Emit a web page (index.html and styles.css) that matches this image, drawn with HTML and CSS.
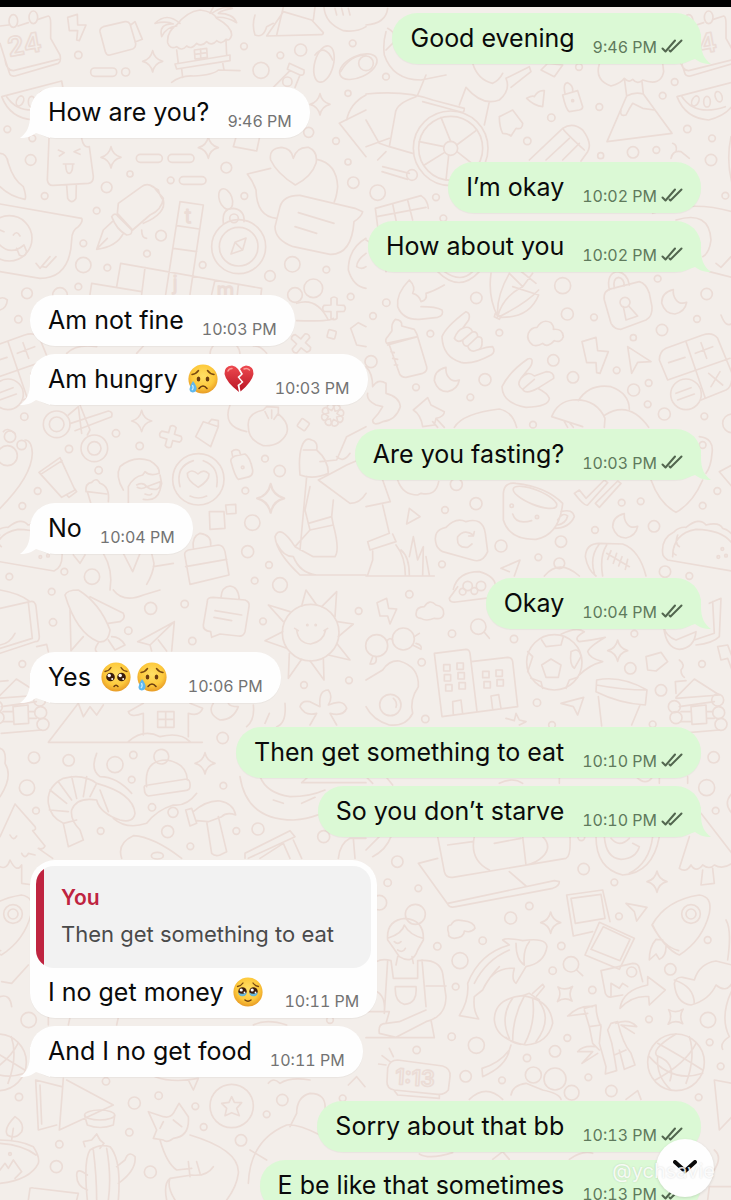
FILE: index.html
```
<!DOCTYPE html>
<html lang="en">
<head>
    <meta charset="UTF-8">
    <meta name="viewport" content="width=device-width, initial-scale=1">
    <title>Chat</title>
    <link rel="stylesheet" href="styles.css">
</head>
<body>
    <svg width="0" height="0" class="defs" aria-hidden="true">
        <defs>
            <radialGradient id="skin" cx="50%" cy="40%" r="60%">
                <stop offset="0" stop-color="#ffe066"/>
                <stop offset="0.65" stop-color="#fdc93c"/>
                <stop offset="1" stop-color="#e79a25"/>
            </radialGradient>
            <linearGradient id="red" x1="0" y1="0" x2="0" y2="1">
                <stop offset="0" stop-color="#ee4a50"/>
                <stop offset="1" stop-color="#b81424"/>
            </linearGradient>
            <symbol id="tail" viewBox="0 0 30 30">
                <path d="M10 0V8C10 18 7 25 0 30C7 30 12 28 16 25L30 30V0Z"/>
            </symbol>
            <symbol id="ticks" viewBox="0 0 22 14">
                <path d="M1.5 9.500L4.500 12.500L14 1.500M9.500 12.500L20.500 1.500M8.500 11.500L9.500 12.500"/>
            </symbol>
            <symbol id="sad" viewBox="0 0 30 30">
                <circle cx="15" cy="15" r="14.6" fill="url(#skin)"/>
                <path d="M4 10.500Q8 10 10.500 6.500M26 10.500Q22 10 19.500 6.500" fill="none" stroke="#7a4a12" stroke-width="1.500" stroke-linecap="round"/>
                <ellipse cx="10.500" cy="15" rx="1.800" ry="2.500" fill="#6b3d10"/>
                <ellipse cx="19.500" cy="15" rx="1.800" ry="2.500" fill="#6b3d10"/>
                <path d="M11 24.500Q15 19.500 19 24.500" fill="none" stroke="#6b3d10" stroke-width="1.600" stroke-linecap="round"/>
                <path d="M5 17Q9 22 8.500 25.500Q7.500 28.500 4.500 28.500Q1.500 28 1.500 25Q2 21 5 17Z" fill="#5fb8ee"/>
                <path d="M4.500 21Q6 24 4 26" fill="none" stroke="#c9ecff" stroke-width="1.300"/>
            </symbol>
            <symbol id="pleading" viewBox="0 0 30 30">
                <circle cx="15" cy="15" r="14.6" fill="url(#skin)"/>
                <path d="M4 9.500Q8 9 10 5.500M26 9.500Q22 9 20 5.500" fill="none" stroke="#7a4a12" stroke-width="1.300" stroke-linecap="round"/>
                <circle cx="9.500" cy="15" r="4.300" fill="#3a1c0c"/>
                <circle cx="20.500" cy="15" r="4.300" fill="#3a1c0c"/>
                <circle cx="8.200" cy="13.500" r="1.700" fill="#fff"/>
                <circle cx="19.200" cy="13.500" r="1.700" fill="#fff"/>
                <circle cx="11.200" cy="17" r="1" fill="#fff"/>
                <circle cx="22.200" cy="17" r="1" fill="#fff"/>
                <path d="M13 24.500Q15 22 17 24.500" fill="none" stroke="#6b3d10" stroke-width="1.500" stroke-linecap="round"/>
            </symbol>
            <symbol id="tears" viewBox="0 0 30 30">
                <circle cx="15" cy="15" r="14.6" fill="url(#skin)"/>
                <path d="M4.500 9.500Q8 9 10 6M25.500 9.500Q22 9 20 6" fill="none" stroke="#7a4a12" stroke-width="1.300" stroke-linecap="round"/>
                <circle cx="9.500" cy="14.500" r="4.200" fill="#3a1c0c"/>
                <circle cx="20.500" cy="14.500" r="4.200" fill="#3a1c0c"/>
                <path d="M5.300 15.500Q9.500 18 13.700 15.500Q13 19.500 9.500 19.300Q6 19.500 5.300 15.500ZM16.300 15.500Q20.500 18 24.700 15.500Q24 19.500 20.500 19.300Q17 19.500 16.300 15.500Z" fill="#67b9dc"/>
                <circle cx="8.200" cy="13" r="1.600" fill="#fff"/>
                <circle cx="19.200" cy="13" r="1.600" fill="#fff"/>
                <circle cx="11.500" cy="15.500" r="0.900" fill="#fff"/>
                <circle cx="22.500" cy="15.500" r="0.900" fill="#fff"/>
                <path d="M12 23Q15 25.500 18 23" fill="none" stroke="#6b3d10" stroke-width="1.500" stroke-linecap="round"/>
            </symbol>
            <symbol id="broken" viewBox="0 0 30 30">
                <path d="M15 28Q2 18 .5 10Q0 2 8 1.500Q12 2 14 5L17 10L13.500 13L17.500 18L13.500 21Z" fill="url(#red)"/>
                <path d="M16.500 27.500Q28 18 29.500 10Q30 2 22 1.500Q18 2 16 5L19 10L15.500 13.500L19.500 18L15.500 21.500Z" fill="url(#red)"/>
                <path d="M4 7Q5 4.500 8 4.500M20 5Q23 3.500 25.500 6" fill="none" stroke="#fb9a96" stroke-width="1.500" stroke-linecap="round"/>
            </symbol>
        </defs>
    </svg>

    <main class="chat">
        <svg class="wallpaper" viewBox="0 0 2193 3600" preserveAspectRatio="xMidYMin slice" aria-hidden="true">
            <defs>
                <path id="sparkle" d="M0-32Q5-7 30 0Q5 6 0 32Q-6 6-30 0Q-6-6 0-32Z"/>
                <path id="plus" d="M-9-30Q0-38 9-30L9-10L30-9Q38 0 30 9L9 10L9 30Q0 38-9 30L-9 10L-30 9Q-38 0-30-9L-9-10Z"/>
                <path id="moon" d="M-3-36Q-38-28-38 4Q-28 37 2 37Q32 30 37 2Q17 10 5-6Q-5-18-3-36Z"/>
            </defs>

            <!-- things that show again at the left edge of the tile -->
            <g id="edge">
                <g transform="translate(1098 870)">
                    <path d="M905 270L880 210Q880 185 900 175L1010 135Q1040 125 1055 145L1098 250Q1100 290 1080 300L1005 330M960 155L1018 325M905 270L1092 205M908 218L957 202M988 190L1040 170M1005 158L1022 205M1028 250L1070 285M1062 245L1035 290M930 310L975 293M935 330L985 312"/>
                    <circle cx="960" cy="313" r="46"/>
                    <path d="M890 790Q885 745 925 725Q940 710 960 712Q1000 680 1020 705Q1060 695 1070 715Q1098 720 1120 770Q1130 830 1098 843L905 810Q890 800 890 790ZM920 800Q920 730 990 718Q1070 720 1098 760M935 735Q925 760 940 770M925 770Q915 790 930 795"/>
                    <circle cx="1069" cy="777" r="4"/><circle cx="1057" cy="801" r="4"/><circle cx="1080" cy="797" r="4"/>
                </g>
                <g transform="translate(1098 1770)">
                    <path d="M930 322L985 267L1060 315L930 325ZM930 310L928 275L960 272M940 350L1045 335M975 350L1020 345L1022 400L978 403ZM945 365H975M1022 365H1040M1022 385H1045M945 395H975M940 430L1060 420"/>
                    <circle cx="925" cy="350" r="18"/><circle cx="930" cy="383" r="18"/><circle cx="1055" cy="330" r="18"/><circle cx="1058" cy="368" r="18"/><circle cx="1065" cy="403" r="18"/>
                </g>
                <g transform="translate(1098 2550)">
                    <path d="M858 225Q900 150 1000 135Q1040 140 1030 190Q1010 270 940 315Q900 300 858 225ZM860 225Q890 290 938 302M890 270L870 268Q850 290 850 330L870 312L880 328Q900 320 900 290"/>
                    <circle cx="975" cy="192" r="28"/><circle cx="975" cy="192" r="15"/>
                    <circle cx="930" cy="637" r="85"/>
                    <path d="M875 580Q930 610 1010 660M850 620Q920 700 1010 670M930 552Q850 600 875 620Q870 680 915 720M875 618Q930 640 912 692M970 560Q990 620 960 700M868 690Q960 640 990 580"/>
                </g>
            </g>
            <use href="#edge" x="-2034"/>

            <!-- calendar and watermelon -->
            <g id="corner">
                <path d="M0 78L26 75M54 78L85 68M114 58L145 48Q152 50 152 70L152 115L180 165Q184 185 175 190L45 228Q30 230 28 218L0 130M15 180Q20 212 40 212L176 178"/>
                <ellipse cx="40" cy="63" rx="13" ry="19"/><ellipse cx="100" cy="52" rx="13" ry="19"/>
                <text x="28" y="170" font-size="80" font-weight="600" transform="rotate(-10 28 170)">24</text>
                <path d="M5 290L185 243L190 270Q180 340 100 360Q30 355 5 290ZM20 290Q60 350 150 320"/>
                <ellipse cx="60" cy="303" rx="10" ry="16" transform="rotate(25 60 303)"/><ellipse cx="95" cy="305" rx="10" ry="16"/><ellipse cx="130" cy="290" rx="10" ry="16" transform="rotate(-20 130 290)"/>
            </g>
            <use href="#corner" x="2026"/>

            <g>
                <path d="M203 52L232 43L233 75L258 75L238 122L230 120L233 92L208 92Z"/>
                <path d="M300 95Q298 85 310 80L375 65Q385 63 390 72L407 130Q408 142 398 147L330 165Q320 167 316 155ZM392 75L405 65L427 118L405 126"/>
                <rect x="272" y="204" width="78" height="25" rx="12"/><use href="#sparkle" x="458" y="184"/>
                <path d="M503 128Q500 95 530 75Q560 35 600 30Q640 35 650 55Q695 80 695 105Q690 125 678 118Q665 135 650 122Q635 140 620 125Q605 142 590 130Q575 150 560 138Q545 155 530 140Q510 150 503 128ZM530 150L535 190M678 122L680 165M525 192L690 165L690 182L530 207ZM545 207L548 232M668 187L672 210M515 247Q545 225 580 228Q640 225 655 210L720 212M583 150L620 145L622 172L585 177ZM602 147V175M584 163L621 158M540 70Q500 35 465 70Q500 62 520 72Q475 70 485 110Q500 80 530 78M630 40L640 21M635 40Q670 15 697 25Q665 30 655 40Q700 40 710 68Q680 50 650 52"/>
                <path d="M765 45Q755 75 765 105Q790 115 800 80L820 70M800 108L850 35L935 60L970 98Q970 104 960 104ZM850 21L830 105M940 60L945 21M972 21Q975 70 1030 92Q1070 98 1098 80M1005 25L1010 45M1025 25L1030 45M1045 25L1050 45"/>
                <ellipse cx="972" cy="192" rx="28" ry="56" transform="rotate(15 972 192)"/><path d="M945 165Q975 130 998 180M1022 215Q1050 165 1098 165"/>
                <ellipse cx="1075" cy="200" rx="60" ry="32" transform="rotate(-25 1075 200)"/>
                <path d="M868 190L912 210Q915 228 900 225L862 208ZM870 212L820 262M900 225L885 262"/><circle cx="862" cy="245" r="14"/>
                <circle cx="235" cy="165" r="11"/><circle cx="377" cy="216" r="12"/><circle cx="732" cy="139" r="10"/><circle cx="783" cy="211" r="24"/><circle cx="841" cy="166" r="10"/><circle cx="902" cy="150" r="18"/><circle cx="1058" cy="130" r="10"/><circle cx="1044" cy="280" r="9"/>
                <circle cx="22" cy="388" r="10"/><circle cx="97" cy="415" r="10"/><circle cx="92" cy="480" r="16"/><circle cx="134" cy="588" r="10"/><circle cx="290" cy="632" r="10"/><circle cx="320" cy="562" r="16"/><circle cx="390" cy="522" r="9"/><circle cx="512" cy="541" r="10"/><circle cx="679" cy="503" r="16"/><circle cx="733" cy="588" r="10"/>
                <circle cx="926" cy="397" r="15"/><circle cx="1008" cy="423" r="10"/><circle cx="1044" cy="486" r="9"/><circle cx="1060" cy="548" r="17"/><circle cx="483" cy="707" r="16"/><circle cx="441" cy="761" r="10"/><circle cx="250" cy="730" r="10"/><circle cx="250" cy="795" r="23"/><circle cx="322" cy="803" r="10"/><circle cx="608" cy="795" r="10"/>
                <circle cx="877" cy="793" r="23"/><circle cx="979" cy="809" r="10"/><circle cx="810" cy="828" r="16"/><circle cx="940" cy="865" r="28"/><circle cx="885" cy="885" r="22"/><circle cx="81" cy="880" r="16"/><circle cx="235" cy="860" r="10"/><circle cx="180" cy="885" r="22"/><circle cx="1052" cy="890" r="10"/>
                <path d="M147 415L142 540Q145 558 160 556L265 550Q280 548 280 530L268 440Q250 445 245 415M200 556L203 595Q215 615 228 595L229 553M175 450l18 8l-15 10M240 447l-18 8l18 8M190 492H222M197 494Q198 520 208 520Q218 518 218 494"/>
                <use href="#sparkle" x="333" y="472"/><use href="#sparkle" x="625" y="443"/><use href="#sparkle" x="960" y="313"/>
                <rect x="409" y="463" width="78" height="24" rx="12"/><rect x="504" y="463" width="78" height="24" rx="12"/><rect x="538" y="530" width="80" height="23" rx="12"/>
                <path d="M707 415L700 440L770 453L778 415M0 460Q20 460 25 490Q40 540 70 560Q80 590 75 598Q30 590 0 560"/>
                <path d="M352 640L355 610L425 560Q440 548 460 560L490 595Q485 630 450 645L398 690ZM335 650Q345 635 355 650L395 690Q398 705 380 705Q350 690 335 650ZM337 665L310 690L290 748Q350 740 370 700M292 745L322 715M425 690Q425 715 440 715M450 556L475 570Q480 590 490 600Q500 640 430 670"/>
                <path d="M0 612L245 655Q250 665 235 680Q215 690 215 720Q210 835 120 835L0 815M50 745L58 765Q75 775 80 755L72 735M-5 730Q30 770 72 735M40 705Q50 690 60 708M0 690L12 695M108 790L120 805L150 770M128 800L138 802L168 770"/><circle cx="28" cy="715" r="68"/>
                <path d="M540 605L610 615L570 883M540 605L497 883M530 677L598 687M520 745L590 755M362 790L785 865M362 790L350 860M435 803L425 883M275 850L425 875M275 850L270 883M645 840L635 883M715 855L712 883M785 865L783 883"/>
                <text x="555" y="668" font-size="60" font-weight="300">t</text><text x="518" y="870" font-size="60" font-weight="300">j</text><text x="650" y="890" font-size="60" font-weight="300">m</text>
                <circle cx="716" cy="740" r="81"/><circle cx="716" cy="740" r="58"/><path d="M693 762L705 727L738 714L728 750ZM705 727L728 750M670 670Q665 625 700 625Q735 630 732 665"/><circle cx="702" cy="655" r="13"/><ellipse cx="677" cy="597" rx="19" ry="32" transform="rotate(-20 677 597)"/>
                <path d="M886 555Q830 520 812 480Q805 445 845 442Q875 445 880 475Q890 440 925 442Q955 455 948 490Q935 530 886 555ZM812 505L742 522Q760 545 768 570Q770 650 830 655M950 478Q1010 490 1013 560Q1010 590 1003 605M840 620Q850 585 900 586L1065 625L1088 635Q1085 650 1062 665Q1055 765 990 763L880 740Q825 720 825 680ZM895 638L1002 670M885 680L950 700"/>
                <path d="M1018 370L1098 470M1018 370L1098 330M1040 360Q1050 310 1098 285M1098 715Q1045 745 1045 810Q1060 860 1098 865M1098 760Q1070 780 1070 800Q1085 810 1098 800"/>
            </g>

            <g transform="translate(1098 0)">
                <path d="M0 75Q60 70 65 25M65 85Q85 95 85 110L90 120L60 150M60 95Q50 130 55 165Q80 240 165 240L240 225M180 225L155 285M280 315L300 262Q350 320 400 300Q435 270 420 235L490 200L495 215L435 262M370 305L355 375M320 190Q335 240 380 250Q400 240 410 220"/>
                <circle cx="254" cy="445" r="112"/><circle cx="254" cy="445" r="96"/><circle cx="254" cy="445" r="21"/>
                <path d="M254 424L225 352M272 435L330 392M273 455L330 500M248 466L240 540M234 440L160 425M236 457L175 495M0 282Q120 270 200 300L295 325Q295 340 285 336L170 305M150 290Q90 310 88 340L70 440L140 460M0 360L40 430L70 440M0 440L70 415M35 480L60 455M50 500L130 520M48 515L125 538"/><circle cx="138" cy="525" r="16"/>
                <path d="M525 210L545 190L590 195L565 230ZM590 285L635 272L650 320Q650 328 640 330L610 335Q600 330 590 285ZM597 280Q590 250 605 248Q622 255 620 275M482 295Q500 285 505 290Q515 270 535 272L530 320Q505 318 482 295M400 350L440 330L470 370Q470 390 450 385L435 408Q425 400 410 400Q400 380 400 350"/>
                <path d="M490 480L590 385Q620 365 650 390Q680 430 665 455L645 483M590 385Q595 395 655 450M540 480L610 415M590 480L640 430"/>
                <path d="M700 192Q685 240 735 258Q765 250 775 235Q790 250 800 238Q815 255 830 240Q885 260 893 215L890 190M775 235L782 288L723 425L918 400L832 282L828 245M782 288Q805 275 832 282M765 330Q760 350 780 345Q790 325 800 310L830 325L865 330M915 475Q920 450 945 455L970 475M920 430Q935 435 930 455"/>
                <path d="M28 625L165 587Q185 600 187 625M28 625L35 680M80 612L92 670M125 600L140 660M32 650L180 622M860 640Q980 600 1098 635M930 660Q1030 630 1035 720Q1030 760 1010 770M1050 790L1065 802L1095 770M1095 410Q1080 480 1098 550M1030 815L1098 832M0 720Q60 750 60 815M215 815Q280 880 340 815M235 815Q285 850 320 815"/>
                <circle cx="0" cy="190" r="22"/><circle cx="60" cy="230" r="10"/><circle cx="639" cy="201" r="10"/><circle cx="620" cy="302" r="3"/><circle cx="700" cy="321" r="10"/><circle cx="556" cy="353" r="11"/><circle cx="484" cy="423" r="11"/><circle cx="890" cy="287" r="10"/><circle cx="926" cy="246" r="10"/><circle cx="964" cy="387" r="11"/><circle cx="1038" cy="415" r="10"/><circle cx="1035" cy="480" r="17"/><circle cx="801" cy="457" r="17"/><circle cx="704" cy="467" r="9"/><circle cx="871" cy="450" r="10"/>
                <circle cx="35" cy="578" r="23"/><circle cx="210" cy="592" r="10"/><circle cx="232" cy="655" r="10"/><circle cx="1078" cy="587" r="10"/><circle cx="590" cy="857" r="24"/><circle cx="875" cy="836" r="10"/>
            </g>

            <g transform="translate(0 870)">
                <use href="#plus" x="1002" y="55"/><use href="#plus" transform="translate(903 160) rotate(40)"/><use href="#plus" transform="translate(512 440) rotate(15)"/><use href="#plus" transform="translate(998 375) rotate(30)"/><use href="#plus" transform="translate(998 375) rotate(75)"/>
                <rect x="983" y="121" width="24" height="24" rx="4" transform="rotate(15 995 133)"/><rect x="896" y="390" width="28" height="28" rx="4" transform="rotate(35 910 404)"/>
                <path d="M0 60Q20 55 22 30Q10 20 0 25M890 40Q950 20 985 90M890 92Q990 95 1000 85M1052 115L1075 98L1098 110M1052 115L1070 165L1098 170M200 190Q230 160 290 170M410 190L430 168M800 190Q780 165 760 168"/>
                <circle cx="170" cy="403" r="40"/><circle cx="170" cy="403" r="22"/><circle cx="283" cy="475" r="40"/><circle cx="283" cy="475" r="20"/>
                <path d="M205 375L235 350L245 430M240 345L270 420L262 435M212 400L325 363Q340 365 335 380L225 422"/>
                <use href="#sparkle" x="425" y="393"/><use href="#sparkle" transform="translate(812 625) scale(1.35)"/>
                <path d="M587 440L610 395L655 410L632 470ZM625 400L635 388L655 392L655 410M690 345Q665 410 740 425M745 410Q740 370 790 360L800 350L835 352L835 372Q870 400 860 430Q840 470 790 467Q745 450 745 410ZM795 365L805 385M815 360V385M835 370L822 388"/>
                <path d="M0 655Q95 560 97 490Q95 450 75 450M10 425Q20 410 45 430"/><circle cx="30" cy="440" r="17"/><circle cx="65" cy="465" r="14"/><circle cx="22" cy="497" r="30"/>
                <path d="M117 547L180 503L225 600L185 622ZM122 553L186 512M200 615L207 622L230 605L223 595M258 605Q255 580 275 577Q290 560 300 580Q330 590 325 635M262 605L272 638M262 605L320 612"/>
                <path d="M370 600Q345 560 360 530Q400 495 450 512Q480 530 478 550Q450 560 435 545L428 555Q400 560 385 590L385 638M480 555L485 580L480 600Q470 635 430 628M410 585Q430 575 440 590L480 575Q485 590 470 598Q450 600 440 590Q425 600 412 592M435 612Q450 618 455 612"/>
                <circle cx="595" cy="568" r="77"/><path d="M540 590Q525 530 580 512M610 512Q660 530 650 590M570 618Q595 630 620 618M595 592Q560 570 562 550Q575 535 594 552Q612 535 627 552Q628 572 595 592Z"/>
                <path d="M693 515Q690 505 705 498L735 492Q750 500 758 540Q760 560 740 562L715 568Q705 560 693 515ZM698 500L695 485Q705 475 718 482L722 495M628 665L672 665L675 715L630 718ZM677 645L707 643L708 670L680 672Z"/><circle cx="728" cy="532" r="4"/>
                <path d="M900 555Q895 500 905 470Q915 440 935 450Q955 455 950 480Q985 510 985 550Q940 570 900 555ZM910 480H950M960 515L1010 510L1040 440L1098 410M1010 500Q1030 520 1050 490M955 570L1050 640Q1080 640 1098 610M955 570Q985 555 1040 525L1098 500M920 560L900 780M930 590L915 660L925 700L995 680L1000 630M925 700L930 720L1000 705L995 680M930 720L885 770Q840 700 825 740Q830 790 900 855H1098M1000 705Q1020 780 1005 800L940 800L885 770M830 760Q850 800 880 800Q900 850 950 855"/>
                <path d="M555 800Q550 785 565 780L655 765Q670 765 675 785L687 855L570 883ZM557 830L680 808M580 775Q575 740 600 730Q635 735 632 765M310 790Q340 840 330 900M370 790L398 845L420 790M455 790L462 820Q460 850 440 883M460 830L520 820M220 795L240 820L255 795"/>
                <circle cx="55" cy="88" r="11"/><circle cx="675" cy="195" r="45"/><circle cx="73" cy="380" r="11"/><circle cx="348" cy="430" r="11"/><circle cx="207" cy="477" r="11"/><circle cx="419" cy="468" r="11"/><circle cx="296" cy="541" r="11"/><circle cx="113" cy="603" r="10"/><circle cx="67" cy="648" r="10"/><circle cx="795" cy="506" r="10"/><circle cx="839" cy="543" r="17"/><circle cx="736" cy="602" r="10"/>
                <circle cx="757" cy="698" r="23"/><circle cx="743" cy="785" r="18"/><circle cx="807" cy="825" r="10"/><circle cx="764" cy="872" r="10"/><circle cx="840" cy="885" r="22"/><circle cx="193" cy="845" r="10"/><circle cx="276" cy="860" r="23"/><circle cx="28" cy="860" r="10"/>
            </g>

            <g transform="translate(1098 870)">
                <path d="M130-30Q90 10 95 50Q110 90 160 88L215 82Q235 75 228 60Q210 50 165 50M130-30Q150-10 140 10Q160 15 165 35Q185 30 180 10Q200 5 235-15"/>
                <path d="M62 160Q55 150 65 140L78 122Q75 100 88 88Q110 90 107 108L145 118Q155 135 155 140ZM65 165L155 140L182 230Q185 245 170 250L120 262Q105 262 100 250L70 165M75 185L85 188M80 205L95 208M85 225L95 225"/>
                <path d="M300 65Q315 70 308 90L290 115Q310 105 320 125Q335 125 335 140Q350 140 348 155Q350 175 335 180Q365 170 380 170Q390 185 375 195Q320 225 285 217Q230 200 228 140Q240 110 300 65ZM290 115Q275 120 265 145Q275 160 290 150L320 125M290 150Q290 170 305 168L335 140M305 168Q310 185 325 183L340 178"/>
                <path d="M500 165Q480 150 487 130Q495 112 513 112Q530 85 555 98Q565 110 562 118Q590 115 592 140Q585 160 565 152Q545 175 530 160Q515 170 500 165Z"/>
                <use href="#moon" x="243" y="268"/><use href="#moon" x="778" y="707"/><use href="#moon" x="925" y="35"/>
                <path d="M498 210Q500 225 485 240L465 265Q485 240 505 258L540 245Q565 245 563 265L515 295Q545 310 550 325Q550 350 480 352Q410 340 408 290Q430 245 485 207Q495 203 498 210ZM465 265Q450 285 470 298L505 268M470 298Q480 315 515 295"/>
                <path d="M395 80Q365 20 375-50M395 80Q390 20 430-50M400 80Q480 40 518 0M402 82Q490 85 518 15L440-10M395 80Q410 20 470-10M388 70L405 80L400 88L385 80ZM430-50L470-10L500-50M460-60L510-20"/>
                <path d="M715 30Q710 0 740-5L820-25Q840-20 850 10L858 50Q860 80 840 90L765 118Q745 118 735 100ZM730 0Q720-50 755-55Q785-50 790-15M745-5Q740-35 757-38Q775-35 775-12M772 50L780 90L815 78L788 48"/><circle cx="777" cy="37" r="15"/>
                <path d="M648 155L690 142L695 182L727 185L702 250L692 248L690 218L662 218ZM785 170L855 215L815 217L797 250Z"/>
                <path d="M557 380Q575 335 620 330Q690 325 717 385L715 412M557 380L650 410M595 395L605 412M612 400L622 412M637 332Q670 280 735 290Q790 310 790 358M717 375Q790 330 848 412"/>
                <path d="M142 360L185 323L195 345L235 365Q235 380 210 385L205 405L170 410Q165 375 142 360ZM210 385L235 412M200 395L215 412M0 230Q20 250 20 290Q35 265 60 280L60 310Q100 320 103 350Q90 390 50 395Q20 410 20 390Q40 370 50 350L30 345Q0 330 5 310M265 412Q290 370 400 357Q440 365 452 412"/>
                <path d="M50 570L73 635L0 650M50 645L70 730L5 755L12 780L90 755L80 732M20 783L20 810L5 855M90 765Q118 800 118 855M0 858H205M105 780Q130 800 130 855M130 800L142 740L155 810L172 770L170 855M180 800L190 855"/>
                <path d="M95 570Q110 615 155 615L165 610Q210 620 218 575M130 655L162 680L122 702ZM210 760Q200 720 240 712Q270 680 300 695Q350 680 358 730L365 785Q350 820 320 810L230 785Q212 775 210 760ZM322 735Q295 715 275 740Q270 775 305 772L318 762M325 725L322 738L308 738"/>
                <path d="M412 610Q415 575 450 580Q540 590 590 640Q580 735 510 748Q430 750 412 690ZM585 665Q620 655 625 680Q610 715 565 715M575 690Q590 665 605 678Q600 700 575 705M440 672Q450 705 497 692"/><ellipse cx="507" cy="622" rx="70" ry="22" transform="rotate(22 507 622)"/><circle cx="437" cy="647" r="5"/><circle cx="513" cy="681" r="5"/>
                <path d="M625 610L640 600L660 625L715 570L725 578L665 645Q655 650 625 610ZM688 640L755 573L765 580L700 652ZM658 800Q660 760 700 760L770 762Q820 780 840 858M658 800Q665 840 690 858M700 762Q670 800 685 850M722 765Q700 800 710 858M722 790L790 830M735 782L725 808M752 790L742 820M768 800L758 828M785 808L778 838"/>
                <path d="M405 835L462 810L445 858M405 835L430 845M262 898Q275 845 340 845Q390 860 388 890M535 858Q580 805 640 858M855 570Q880 640 930 667Q980 640 1010 570M1000 440Q1045 445 1038 490Q1035 530 1020 550M1060 545L1098 525M1060 545L1098 590M1065 75Q1080 115 1098 100"/>
                <circle cx="305" cy="888" r="14"/><circle cx="345" cy="888" r="14"/><circle cx="580" cy="820" r="16"/><circle cx="1010" cy="465" r="10"/><circle cx="1098" cy="400" r="28"/>
                <circle cx="61" cy="38" r="11"/><circle cx="21" cy="78" r="10"/><circle cx="15" cy="215" r="18"/><circle cx="193" cy="131" r="10"/><circle cx="331" cy="24" r="17"/><circle cx="400" cy="128" r="10"/><circle cx="562" cy="211" r="17"/><circle cx="604" cy="72" r="18"/><circle cx="684" cy="82" r="10"/><circle cx="621" cy="262" r="17"/><circle cx="357" cy="269" r="18"/><circle cx="313" cy="322" r="10"/><circle cx="150" cy="292" r="10"/><circle cx="752" cy="241" r="10"/><circle cx="802" cy="143" r="9"/><circle cx="888" cy="120" r="17"/><circle cx="993" cy="87" r="10"/><circle cx="1022" cy="12" r="17"/><circle cx="803" cy="300" r="18"/><circle cx="848" cy="279" r="10"/><circle cx="845" cy="343" r="10"/><circle cx="895" cy="372" r="18"/><circle cx="1015" cy="379" r="10"/><circle cx="501" cy="404" r="10"/>
                <circle cx="271" cy="583" r="18"/><circle cx="330" cy="641" r="18"/><circle cx="237" cy="660" r="10"/><circle cx="767" cy="638" r="10"/><circle cx="824" cy="634" r="10"/><circle cx="864" cy="709" r="17"/><circle cx="687" cy="720" r="10"/><circle cx="585" cy="755" r="17"/><circle cx="405" cy="768" r="18"/><circle cx="517" cy="802" r="10"/><circle cx="228" cy="823" r="10"/><circle cx="1010" cy="647" r="10"/><circle cx="1054" cy="603" r="10"/><circle cx="897" cy="845" r="17"/><circle cx="970" cy="858" r="10"/>
            </g>

            <g transform="translate(0 1770)">
                <path d="M0 55L90 35Q105 30 108 50L118 140Q118 155 105 155L0 190M85 38L97 145L0 175M0 0Q60 10 90 35M45 130Q30 160 0 165M110 170L140 163L145 185"/>
                <path d="M195 15Q200 0 235 0Q300 40 330 120Q325 160 295 155Q230 130 195 15ZM210 60L213 182L250 140M270 20L370 70Q378 85 360 95L325 100M295 158Q280 180 290 185M325 150L345 180L375 165Q360 140 335 140M340 0Q370 40 430 15L480 0M413 155L523 95L515 183M413 155L450 165L523 95M450 165L455 183M475 150L500 183"/>
                <path d="M622 35Q620 22 640 22L735 30Q750 35 747 50L735 125Q730 140 715 138L660 132L635 142L632 125Q608 122 610 105ZM663 22Q665-10 690-12Q715-10 718 28M645 62L725 75M642 82L695 92"/>
                <circle cx="932" cy="128" r="85"/><circle cx="922" cy="105" r="2"/><circle cx="947" cy="105" r="2"/>
                <path d="M870 65L805 45L850 95M905 48L918 0L950 45M965 50L1010 5L1005 80M1012 95L1060 102L1015 140M1010 160L1050 210L985 195M970 205L972 270L930 212M905 208L865 265L868 190M860 175L795 152L848 125M890 120Q895 160 932 162Q970 155 977 120M884 115L895 122M972 122L983 115"/>
                <path d="M900 350Q905 330 930 335Q950 345 960 350Q955 300 985 300Q1000 320 985 345Q1030 325 1040 355Q1030 380 990 370L1010 405M900 350Q915 380 950 370L930 405"/>
                <path d="M145 457H607M145 457L235 340L250 380L270 350L290 375L310 345M385 365L430 340M385 365Q390 385 430 370V435M565 370V440M565 370Q600 380 608 355L570 340M385 455Q430 415 480 440Q540 425 570 455M473 365H522V412H473ZM497 365V412M473 388H522M640 340Q620 370 660 390Q700 390 715 350Q690 350 685 340"/>
                <path d="M855 340Q860 400 830 410M760 345Q765 390 740 410M808 370L795 400M720 560Q740 690 880 690Q960 685 1010 640M780 560Q800 610 870 620Q930 620 975 600M820 630L850 640M905 640L945 622M905 578H1098M905 578L925 560"/>
                <path d="M145 640Q140 590 190 565Q250 550 290 580Q400 610 405 670Q400 700 360 690Q300 670 290 630Q230 620 215 660Q210 690 240 720L250 750L205 770L190 700Q150 680 145 640ZM150 600L200 640M175 575L215 630M215 560L230 625M260 560L250 620M290 580L270 620M148 660L205 665M300 600L325 665M290 490Q270 540 300 560Q350 560 395 610M590 610Q560 650 520 645Q470 660 440 700Q380 720 340 685M190 700L230 690"/>
                <path d="M440 590Q430 510 500 510Q560 520 562 570M433 595Q430 585 445 585L560 567Q572 570 570 590Q570 600 555 602L445 618Q433 615 433 595Z"/><circle cx="484" cy="500" r="22" stroke-dasharray="12 3"/><use href="#sparkle" x="615" y="520"/>
                <path d="M557 660L575 655L590 700L570 708ZM580 665Q620 630 660 633Q700 640 707 675Q680 665 665 680L625 695L590 692M620 695L635 790Q645 800 660 795L680 785L655 680"/>
                <path d="M0 475Q20 480 15 520Q40 560 0 620M45 642L0 740M45 642L105 710Q110 720 98 722L135 768Q130 780 115 775L158 805M65 790Q75 810 85 790L105 795M30 735Q40 755 50 738M0 830Q20 840 30 810Q50 850 65 825L65 880L100 885"/>
                <path d="M365 805Q350 760 400 737Q460 740 545 805M735 790L870 722L885 740L745 805M735 790V805M780 805L850 760M850 760L870 805M880 750L905 805M1015 805Q1020 760 1050 745L1098 745M1060 745L1065 805"/><ellipse cx="472" cy="797" rx="18" ry="10"/>
                <circle cx="159" cy="97" r="11"/><circle cx="155" cy="5" r="10"/><circle cx="385" cy="122" r="11"/><circle cx="452" cy="55" r="18"/><circle cx="554" cy="42" r="11"/><circle cx="577" cy="153" r="11"/><circle cx="789" cy="94" r="10"/><circle cx="1076" cy="63" r="10"/><circle cx="912" cy="285" r="10"/><circle cx="1047" cy="271" r="10"/><circle cx="668" cy="444" r="17"/><circle cx="102" cy="503" r="17"/><circle cx="206" cy="511" r="17"/><circle cx="345" cy="524" r="24"/><circle cx="400" cy="495" r="11"/><circle cx="395" cy="569" r="10"/>
                <circle cx="456" cy="652" r="11"/><circle cx="519" cy="667" r="15"/><circle cx="503" cy="725" r="18"/><circle cx="302" cy="723" r="10"/><circle cx="108" cy="662" r="10"/><circle cx="81" cy="593" r="23"/><circle cx="670" cy="587" r="10"/><circle cx="709" cy="723" r="10"/><circle cx="571" cy="769" r="10"/><circle cx="774" cy="717" r="18"/><circle cx="971" cy="740" r="18"/><circle cx="67" cy="222" r="10"/>
            </g>

            <g transform="translate(1098 1770)">
                <path d="M275-10L250 25Q250 38 270 36L380 22M33 38L62 25L68 55L92 57L72 102L65 78L42 78ZM150 72Q150 50 175 50Q190 25 210 45Q235 50 233 72Q230 90 205 85Q180 95 165 85Q150 85 150 72ZM355 127L370 145"/>
                <circle cx="290" cy="5" r="10"/><circle cx="325" cy="3" r="10"/><circle cx="337" cy="110" r="23"/><circle cx="32" cy="167" r="33"/><circle cx="112" cy="147" r="33"/><circle cx="73" cy="345" r="32"/>
                <path d="M62 155Q70 140 80 150M145 140L160 130M140 165L165 178Q170 165 150 160M20 200L12 222M30 200Q35 225 12 222M0 270L50 240Q70 210 100 213Q160 230 157 290Q130 330 140 370Q120 410 70 405Q20 390 0 350M82 325Q95 335 90 352"/>
                <path d="M228 380L205 190L300 178Q310 178 312 190L315 215L425 202Q438 202 440 215L455 350ZM315 215L333 365M262 375L260 335L285 330L290 372M380 358L375 318L398 314L405 355"/>
                <rect x="233" y="224" width="19" height="19"/><rect x="273" y="219" width="19" height="19"/><rect x="235" y="254" width="19" height="19"/><rect x="276" y="248" width="19" height="19"/><rect x="239" y="284" width="19" height="19"/><rect x="279" y="278" width="19" height="19"/><rect x="350" y="244" width="19" height="19"/><rect x="390" y="240" width="19" height="19"/><rect x="354" y="275" width="19" height="19"/><rect x="393" y="269" width="19" height="19"/>
                <circle cx="565" cy="217" r="83"/>
                <path d="M527 225L555 207L585 225L577 262L540 262ZM527 150L540 170L585 165L592 140M615 185Q640 170 645 200L625 235Q610 225 615 185M485 185L500 200L485 245M495 265L525 275L530 295M600 295L610 270L635 262M585 133Q630 110 655 125Q620 145 640 155Q680 150 718 142Q670 170 665 185Q670 205 710 215Q670 225 640 255"/>
                <use href="#sparkle" x="755" y="182"/><use href="#sparkle" x="873" y="875"/>
                <path d="M840 200L885 187L905 215L870 243L845 240ZM1030 40L1065 25L1060 140Q1040 160 990 165M1040 35L1045 130L985 150M893 110Q900 175 940 178Q985 175 990 125L930 150Q900 140 893 110ZM1055 170L1085 165L1098 200M1055 170L1065 210L1085 205L1098 240M940 210Q960 225 945 240Q945 255 955 262"/>
                <path d="M585 340L653 322L635 375L622 350ZM692 270Q765 255 843 300L838 345Q760 340 690 305ZM692 285Q770 300 843 300M697 320L707 408M822 345L797 405M420 385L445 392L450 370L460 390L480 395L460 405"/>
                <path d="M215 740L235 845Q240 865 260 862L600 805Q615 800 612 740M325 740Q310 810 370 840M470 740L480 825M530 740Q560 770 530 800Q510 820 480 825M245 765L320 755M385 760L465 745M690 740Q690 835 770 855Q860 850 880 740M715 740Q720 805 765 808Q810 805 820 770L800 760M860 740Q850 820 790 850M735 745Q760 775 790 745"/>
                <path d="M970 740L940 835Q960 850 975 825Q990 850 1010 825Q1030 840 1045 825Q1070 840 1098 820M1005 670L1098 790M1010 840L1005 885L1045 880L1040 835M1098 610Q1070 640 1098 670M0 780L40 740M20 800Q60 780 75 740M810 560Q840 590 860 560M880 560V580M965 560V580M60 560L80 585M20 580L0 560M580 560V580M400 580Q440 560 470 580"/>
                <circle cx="130" cy="13" r="11"/><circle cx="258" cy="131" r="11"/><circle cx="444" cy="147" r="11"/><circle cx="167" cy="217" r="11"/><circle cx="178" cy="387" r="11"/><circle cx="513" cy="338" r="11"/><circle cx="805" cy="131" r="10"/><circle cx="793" cy="235" r="17"/><circle cx="1008" cy="222" r="10"/><circle cx="885" cy="301" r="17"/><circle cx="860" cy="403" r="10"/><circle cx="1043" cy="502" r="17"/><circle cx="1022" cy="593" r="24"/><circle cx="1049" cy="662" r="10"/><circle cx="94" cy="815" r="17"/><circle cx="653" cy="837" r="17"/><circle cx="745" cy="877" r="10"/><circle cx="646" cy="742" r="10"/><circle cx="558" cy="405" r="10"/>
            </g>

            <g transform="translate(0 2550)">
                <circle cx="695" cy="768" r="65"/>
                <path d="M695 740L703 757L725 758L710 775L718 797L695 788L675 797L680 775L665 760L687 757ZM107 690L185 710M107 690L115 840L170 825M190 685L178 840L340 765L200 690M120 705L125 822M254 797L262 825Q300 840 340 825L344 797"/><ellipse cx="299" cy="795" rx="45" ry="15"/>
                <path d="M45 800Q10 835 22 855Q45 870 65 845Q75 820 45 800ZM40 835L35 870M0 870Q60 870 100 890Q120 920 115 940Q90 990 0 1000M0 880Q70 885 108 915M0 960L15 940L25 955L40 930L65 965L45 985"/><circle cx="30" cy="912" r="4"/>
                <path d="M262 1050Q250 930 270 900Q300 880 330 890Q365 930 355 1050M255 890L250 875L275 870L290 852L300 870L312 880L300 895M280 900Q290 980 290 1050M320 895Q335 980 325 1050M262 975Q230 950 230 975Q230 1010 262 1020M355 1000Q410 960 405 920Q385 900 375 930L350 950M85 1050L90 1015Q95 1012 100 1014L235 1030L230 1050"/>
                <path d="M445 785L490 800Q510 805 520 790L537 760L565 800Q570 860 520 865Q500 880 490 870L460 865L470 840ZM490 815L480 835M520 810L545 830M480 870Q500 940 530 960L575 955M570 855Q720 900 715 970Q710 1010 680 1050M525 1050Q500 1010 510 985L575 975Q620 980 640 950M510 985Q490 1000 500 1050M565 935L570 980M590 935L600 970"/>
                <path d="M745 1000Q750 870 860 825Q890 820 960 855M750 900L800 930M890 790Q890 740 930 730Q980 730 975 780M890 790L870 830M145 502V525M210 502L205 525M350 525L355 502M760 525Q800 505 860 525M465 680Q520 700 595 685L580 720L565 690M805 700Q820 680 840 700Q870 680 930 690M1045 705L1070 680L1095 710M5 395L35 400L85 345M0 440Q30 430 35 470"/>
                <circle cx="57" cy="741" r="11"/><circle cx="403" cy="759" r="18"/><circle cx="476" cy="737" r="11"/><circle cx="318" cy="694" r="11"/><circle cx="586" cy="769" r="10"/><circle cx="611" cy="831" r="10"/><circle cx="388" cy="847" r="11"/><circle cx="178" cy="883" r="11"/><circle cx="169" cy="950" r="18"/><circle cx="451" cy="966" r="18"/><circle cx="723" cy="871" r="17"/><circle cx="800" cy="793" r="10"/><circle cx="847" cy="750" r="17"/><circle cx="86" cy="510" r="23"/><circle cx="990" cy="510" r="10"/><circle cx="1028" cy="745" r="10"/>
            </g>

            <g transform="translate(1098 2550)">
                <path d="M215 25L157 40L245 162Q250 175 270 170L560 115Q580 108 580 95L565 92L245 160M430 65L480 108M602 135L710 120L732 215M602 135L622 258L680 245M615 145L705 133L717 205L628 220ZM700 217L805 265L760 358L657 315ZM712 230L792 268L762 332L675 298ZM780 160L843 172L812 213L805 185ZM632 360L650 377"/>
                <path d="M248 250Q240 225 255 225Q265 205 290 212Q325 215 327 235Q315 250 295 243Q295 262 265 265Q245 262 248 250Z"/>
                <use href="#sparkle" x="554" y="218"/><use href="#sparkle" transform="translate(597 432) rotate(45)"/><use href="#sparkle" transform="translate(929 500) rotate(45)"/>
                <path d="M705 362L800 340Q818 340 820 355L830 395M705 362L718 430Q725 445 740 440L770 435M735 440L735 400L760 415L770 400L785 410M762 475Q770 420 845 405L845 380L898 420L850 465L848 440Q800 435 762 475Z"/><circle cx="797" cy="366" r="15"/>
                <path d="M925 400Q930 380 950 382L985 390Q1000 340 1050 333L1098 345M925 400Q930 460 975 465Q1030 450 1050 405Q1080 430 1098 400M925 390Q985 410 985 462M1080 210Q1098 240 1085 330M1098 420Q1060 500 1090 560Q1060 580 1070 598"/>
                <circle cx="148" cy="193" r="30"/>
                <path d="M65 270Q60 210 118 205Q175 210 172 270L155 300Q140 345 100 320Q80 290 65 270ZM65 265Q110 250 115 225Q130 255 172 265M85 275Q95 285 105 275M95 300Q110 310 118 295M95 320L90 345M138 320L142 340M30 335Q50 325 75 332L82 385L155 385L155 332M65 332L55 490M168 330L180 470M155 332Q220 325 230 370L240 440Q240 500 180 515L90 562L40 550Q35 520 60 520L100 515L180 480M180 408L240 408M88 410L150 410Q155 460 115 463Q85 455 88 410ZM0 563H205L195 510M0 485L70 485L60 520M20 420Q60 430 55 485"/>
                <path d="M410 270Q420 262 470 272Q540 262 543 290Q535 340 480 350L450 400Q435 390 445 355Q380 350 350 420L325 440Q320 480 338 507L280 497Q310 450 305 400Q340 310 430 285ZM450 280Q450 330 475 345Q470 300 490 275M430 300Q360 330 325 400M400 350Q370 380 350 420"/>
                <path d="M385 510Q385 445 470 437Q555 450 560 520Q545 580 480 585Q390 570 385 510ZM440 445Q400 500 430 565M475 438Q440 500 440 575M500 445Q510 520 475 583M520 455Q560 510 510 575M470 437L490 430L520 450M500 430L530 403L535 410L512 438M420 562Q440 580 465 583M430 600Q400 640 348 655L350 680Q420 650 430 600L435 585"/>
                <path d="M655 475L690 465Q690 500 705 530L700 580L720 650L718 672L752 662L745 620Q740 580 725 540L735 520L755 515Q770 580 795 610L807 645L775 658L760 600M655 480L670 530L680 580L700 600M605 498Q640 465 680 470M605 498L665 490M635 605Q650 585 690 590M635 605L680 605L648 640L695 610M750 520Q790 505 812 530L765 525L805 550M670 530L705 525M745 615L780 600"/>
                <path d="M65 655Q70 630 95 630L230 648Q255 655 252 680L247 720Q235 735 215 733L85 720Q62 715 63 695ZM85 722L95 735L220 745L220 733M70 595L82 620M48 617L72 635M38 642L60 645"/><text x="86" y="702" font-size="66" font-weight="600" transform="rotate(4 86 702)">1:13</text>
                <path d="M435 735Q440 705 480 700L530 720Q580 730 585 748M310 748Q360 700 410 748M780 748L815 722L825 748M1045 690L1098 700M1045 690L1060 840L1098 800M160 912Q190 930 260 908M380 928L410 905L430 928M610 928Q650 900 680 910M1045 960Q1070 920 1045 900M1030 1010H1098M1030 1010L1025 1050"/>
                <circle cx="65" cy="98" r="11"/><circle cx="157" cy="115" r="10"/><circle cx="40" cy="158" r="22"/><circle cx="434" cy="204" r="18"/><circle cx="490" cy="168" r="11"/><circle cx="350" cy="272" r="11"/><circle cx="282" cy="332" r="24"/><circle cx="214" cy="289" r="11"/><circle cx="269" cy="410" r="10"/><circle cx="257" cy="560" r="11"/><circle cx="152" cy="600" r="11"/><circle cx="331" cy="586" r="24"/><circle cx="299" cy="679" r="17"/><circle cx="408" cy="691" r="10"/><circle cx="483" cy="624" r="11"/><circle cx="567" cy="604" r="17"/><circle cx="604" cy="564" r="10"/><circle cx="586" cy="288" r="11"/>
                <circle cx="560" cy="362" r="11"/><circle cx="615" cy="343" r="23"/><circle cx="679" cy="420" r="11"/><circle cx="759" cy="199" r="10"/><circle cx="1025" cy="270" r="10"/><circle cx="913" cy="358" r="17"/><circle cx="849" cy="508" r="10"/><circle cx="1026" cy="510" r="23"/><circle cx="1031" cy="577" r="10"/><circle cx="1064" cy="649" r="10"/><circle cx="998" cy="742" r="10"/><circle cx="736" cy="723" r="17"/><circle cx="667" cy="682" r="10"/><circle cx="502" cy="675" r="24"/><circle cx="567" cy="687" r="33"/><circle cx="617" cy="728" r="22"/>
            </g>
        </svg>

        <div class="messages">
            <div class="group out">
                <div class="bubble last">
                    <svg class="tail"><use href="#tail"/></svg>
                    <div class="line"><p>Good evening</p><span class="time">9:46 PM</span><svg class="ticks"><use href="#ticks"/></svg></div>
                </div>
            </div>
            <div class="group in">
                <div class="bubble last">
                    <svg class="tail"><use href="#tail"/></svg>
                    <div class="line"><p>How are you?</p><span class="time">9:46 PM</span></div>
                </div>
            </div>
            <div class="group out">
                <div class="bubble">
                    <div class="line"><p>I’m okay</p><span class="time">10:02 PM</span><svg class="ticks"><use href="#ticks"/></svg></div>
                </div>
                <div class="bubble last">
                    <svg class="tail"><use href="#tail"/></svg>
                    <div class="line"><p>How about you</p><span class="time">10:02 PM</span><svg class="ticks"><use href="#ticks"/></svg></div>
                </div>
            </div>
            <div class="group in">
                <div class="bubble">
                    <div class="line"><p>Am not fine</p><span class="time">10:03 PM</span></div>
                </div>
                <div class="bubble last">
                    <svg class="tail"><use href="#tail"/></svg>
                    <div class="line"><p>Am hungry <svg class="emoji"><use href="#sad"/></svg><svg class="emoji"><use href="#broken"/></svg></p><span class="time">10:03 PM</span></div>
                </div>
            </div>
            <div class="group out">
                <div class="bubble last">
                    <svg class="tail"><use href="#tail"/></svg>
                    <div class="line"><p>Are you fasting?</p><span class="time">10:03 PM</span><svg class="ticks"><use href="#ticks"/></svg></div>
                </div>
            </div>
            <div class="group in">
                <div class="bubble last">
                    <svg class="tail"><use href="#tail"/></svg>
                    <div class="line"><p>No</p><span class="time">10:04 PM</span></div>
                </div>
            </div>
            <div class="group out">
                <div class="bubble last">
                    <svg class="tail"><use href="#tail"/></svg>
                    <div class="line"><p>Okay</p><span class="time">10:04 PM</span><svg class="ticks"><use href="#ticks"/></svg></div>
                </div>
            </div>
            <div class="group in">
                <div class="bubble last">
                    <svg class="tail"><use href="#tail"/></svg>
                    <div class="line"><p>Yes <svg class="emoji"><use href="#pleading"/></svg><svg class="emoji"><use href="#sad"/></svg></p><span class="time">10:06 PM</span></div>
                </div>
            </div>
            <div class="group out">
                <div class="bubble">
                    <div class="line"><p>Then get something to eat</p><span class="time">10:10 PM</span><svg class="ticks"><use href="#ticks"/></svg></div>
                </div>
                <div class="bubble last">
                    <svg class="tail"><use href="#tail"/></svg>
                    <div class="line"><p>So you don’t starve</p><span class="time">10:10 PM</span><svg class="ticks"><use href="#ticks"/></svg></div>
                </div>
            </div>
            <div class="group in">
                <div class="bubble">
                    <blockquote class="quote">
                        <strong>You</strong>
                        <span>Then get something to eat</span>
                    </blockquote>
                    <div class="line"><p>I no get money <svg class="emoji"><use href="#tears"/></svg></p><span class="time">10:11 PM</span></div>
                </div>
                <div class="bubble last">
                    <svg class="tail"><use href="#tail"/></svg>
                    <div class="line"><p>And I no get food</p><span class="time">10:11 PM</span></div>
                </div>
            </div>
            <div class="group out">
                <div class="bubble">
                    <div class="line"><p>Sorry about that bb</p><span class="time">10:13 PM</span><svg class="ticks"><use href="#ticks"/></svg></div>
                </div>
                <div class="bubble">
                    <div class="line"><p>E be like that sometimes</p><span class="time">10:13 PM</span><svg class="ticks"><use href="#ticks"/></svg></div>
                </div>
            </div>
        </div>

        <button class="scroll-down" type="button" aria-label="Scroll to latest">
            <svg viewBox="0 0 24 14"><path d="M2 2L12 11L22 2"/></svg>
        </button>
        <span class="handle">@ychsavie</span>
    </main>
</body>
</html>
```
FILE: styles.css
```
* {
    box-sizing: border-box;
}

body {
    margin: 0;
    font-family: Inter, "Liberation Sans", sans-serif;
    color: #0a0a0a;
}

.defs {
    position: absolute;
}

.chat {
    position: relative;
    height: 100vh;
    overflow: hidden;
    background-color: #f3eeea;
    border-top: 7px solid #000;
}

.wallpaper {
    position: absolute;
    top: -7px;
    left: 0;
    width: 100%;
    height: 100vh;
    fill: none;
    stroke: #ebdcd6;
    stroke-width: 5;
    stroke-linejoin: round;
    stroke-linecap: round;
}

.messages {
    position: relative;
    display: flex;
    flex-direction: column;
    padding: 6px 30px 0;
}

.group {
    display: flex;
    flex-direction: column;
    gap: 8px;
}

.group.in {
    align-items: flex-start;
    margin-top: 23px;
}

.group.out {
    align-items: flex-end;
    margin-top: 24px;
}

.group:first-child {
    margin-top: 0;
}

.bubble {
    position: relative;
    border-radius: 25px;
    box-shadow: 0 1px 1px rgba(0, 0, 0, 0.04);
}

.in .bubble {
    background-color: #fefefe;
}

.out .bubble {
    background-color: #dbf9d5;
}

.tail {
    position: absolute;
    bottom: 0;
    left: -10px;
    width: 30px;
    height: 30px;
    fill: #fefefe;
}

.out .tail {
    left: auto;
    right: -10px;
    fill: #dbf9d5;
    transform: scaleX(-1);
}

.line {
    position: relative;
    display: flex;
    align-items: flex-end;
    padding: 10px 18px 7px;
}

.line p {
    margin: 0 18px 3px 0;
    font-size: 25px;
    line-height: 31px;
    white-space: nowrap;
}

.time {
    margin-left: auto;
    font-size: 16px;
    line-height: 20px;
    font-variant-numeric: tabular-nums;
    color: #737373;
    white-space: nowrap;
}

.out .time {
    color: #5f7a5c;
}

.ticks {
    width: 22px;
    height: 14px;
    margin: 0 0 4px 4px;
    fill: none;
    stroke: #52664f;
    stroke-width: 2;
    stroke-linecap: round;
    stroke-linejoin: round;
}

.emoji {
    width: 30px;
    height: 30px;
    margin: 0 3px;
    vertical-align: -6px;
}

.quote {
    display: flex;
    flex-direction: column;
    gap: 10px;
    margin: 6px 6px 0;
    padding: 18px 36px 20px 25px;
    background: linear-gradient(to right, #bf2440 8px, #f2f2f2 8px);
    border-radius: 18px;
    font-size: 22px;
    line-height: 27px;
    color: #4a4a4a;
    white-space: nowrap;
}

.quote strong {
    font-size: 21px;
    font-weight: 600;
    color: #bf2440;
}

.quote + .line {
    padding-top: 9px;
}

.scroll-down {
    position: absolute;
    right: 17px;
    bottom: 3px;
    width: 58px;
    height: 58px;
    padding: 0;
    border: none;
    border-radius: 50%;
    background-color: #fefefe;
    box-shadow: 0 1px 3px rgba(0, 0, 0, 0.12);
    cursor: pointer;
}

.scroll-down svg {
    width: 24px;
    height: 14px;
    fill: none;
    stroke: #0a0a0a;
    stroke-width: 4;
    stroke-linecap: round;
}

.handle {
    position: absolute;
    right: 16px;
    bottom: 16px;
    font-size: 20px;
    line-height: 26px;
    color: rgba(255, 255, 255, 0.85);
    text-shadow: 0 0 2px rgba(0, 0, 0, 0.15);
    pointer-events: none;
}
```
